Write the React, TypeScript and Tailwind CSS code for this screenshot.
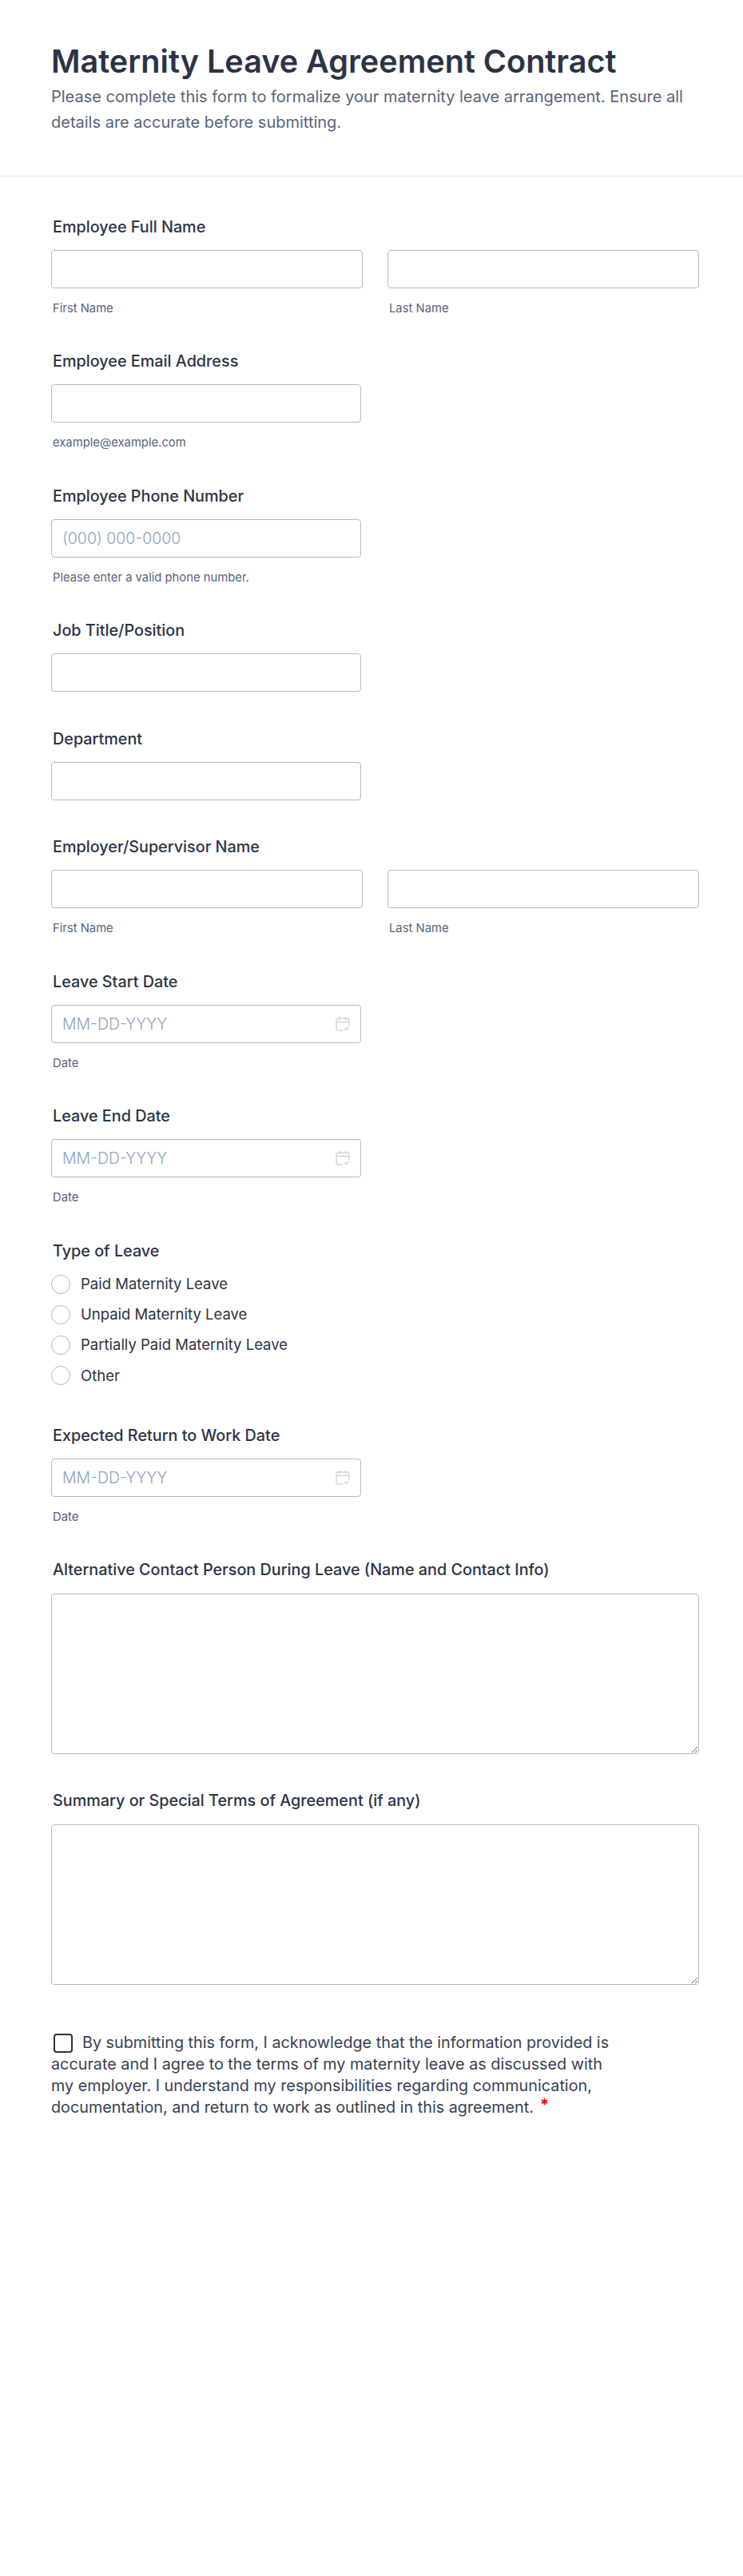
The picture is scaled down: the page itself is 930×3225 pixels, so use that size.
const inputCls =
  "block h-12 rounded-[4px] border border-[#b3b9c6] bg-white px-[13px] text-[19.5px] font-light text-[#2c3345] placeholder:text-[#8ea3bd] outline-none";

function Label({ children }: { children: string }) {
  return <div className="mb-[17px] ml-0.5 h-6 whitespace-nowrap text-[19.8px] font-[450] leading-6 text-[#2c3345]">{children}</div>;
}

function Sub({ children }: { children: string }) {
  return <div className="mt-[17px] ml-0.5 h-4 whitespace-nowrap text-[14.8px] leading-4 text-[#57647e]">{children}</div>;
}

function NameField({ label }: { label: string }) {
  return (
    <div>
      <Label>{label}</Label>
      <div className="flex w-[811px] gap-[31px]">
        <div className="flex-1">
          <input className={inputCls + " w-full"} />
          <Sub>First Name</Sub>
        </div>
        <div className="flex-1">
          <input className={inputCls + " w-full"} />
          <Sub>Last Name</Sub>
        </div>
      </div>
    </div>
  );
}

function TextField({ label, placeholder, sub }: { label: string; placeholder?: string; sub?: string }) {
  return (
    <div>
      <Label>{label}</Label>
      <input className={inputCls + " w-[388px]"} placeholder={placeholder} />
      {sub ? <Sub>{sub}</Sub> : null}
    </div>
  );
}

function CalendarIcon() {
  return (
    <svg width="18" height="18" viewBox="0 0 18 18" fill="none" aria-hidden="true" className="absolute right-[14px] top-[15px]">
      <path
        d="M8.500 17H2.500A1.500 1.500 0 0 1 1 15.500V3.500A1.500 1.500 0 0 1 2.500 2h13A1.500 1.500 0 0 1 17 3.500V11M1 6.500h16M5 0.500v3M13 0.500v3M11.500 15l1.500 1.500 3-3"
        stroke="#c3c8d3"
        strokeWidth="1.100"
        strokeLinecap="round"
        strokeLinejoin="round"
      />
    </svg>
  );
}

function DateField({ label }: { label: string }) {
  return (
    <div>
      <Label>{label}</Label>
      <div className="relative w-[388px]">
        <input className={inputCls + " w-full"} placeholder="MM-DD-YYYY" />
        <CalendarIcon />
      </div>
      <Sub>Date</Sub>
    </div>
  );
}

function AreaField({ label }: { label: string }) {
  return (
    <div>
      <div className="mb-[17.500px] ml-0.5 h-6 whitespace-nowrap text-[19.8px] font-[450] leading-6 text-[#2c3345]">{label}</div>
      <textarea className="block h-[201px] w-[811px] rounded-[4px] border border-[#b3b9c6] bg-white p-3 outline-none" />
    </div>
  );
}

const leaveTypes = ["Paid Maternity Leave", "Unpaid Maternity Leave", "Partially Paid Maternity Leave", "Other"];

export default function App() {
  return (
    <div className="min-h-[3225px] bg-white font-['Inter',sans-serif] text-[#2c3345]">
      <header className="h-[221px] border-b border-[#e3e5ea] px-16 pt-[49px]">
        <h1 className="text-[39.600px] font-semibold leading-[56px] text-[#2c3345]">Maternity Leave Agreement Contract</h1>
        <p className="w-[810px] text-[20px] leading-8 text-[#57647e]">
          Please complete this form to formalize your maternity leave arrangement. Ensure all details are accurate before submitting.
        </p>
      </header>

      <main className="flex flex-col gap-[46.450px] px-16 pt-[51px]">
        <NameField label="Employee Full Name" />
        <TextField label="Employee Email Address" sub="example@example.com" />
        <TextField label="Employee Phone Number" placeholder="(000) 000-0000" sub="Please enter a valid phone number." />
        <TextField label="Job Title/Position" />
        <TextField label="Department" />
        <NameField label="Employer/Supervisor Name" />
        <DateField label="Leave Start Date" />
        <DateField label="Leave End Date" />

        <div className="mb-1">
          <div className="mb-[18px] ml-0.5 h-6 whitespace-nowrap text-[19.8px] font-[450] leading-6 text-[#2c3345]">Type of Leave</div>
          <div className="flex flex-col gap-[14.330px]">
            {leaveTypes.map((t) => (
              <div key={t} className="flex h-6 items-center gap-[13px]">
                <span className="h-6 w-6 rounded-full border border-[#b3b9c6] bg-white" />
                <span className="text-[18.5px] text-[#2c3345]">{t}</span>
              </div>
            ))}
          </div>
        </div>

        <DateField label="Expected Return to Work Date" />
        <AreaField label="Alternative Contact Person During Leave (Name and Contact Info)" />
        <AreaField label="Summary or Special Terms of Agreement (if any)" />

        <div className="mt-[13px] w-[710px] text-[19.800px] leading-[27px] text-[#373f53]">
          <span className="ml-[3px] mr-3 inline-block h-6 w-6 rounded-[4px] border-2 border-[#2c3345] align-[-6px]" />
          By submitting this form, I acknowledge that the information provided is accurate and I agree to the terms of my maternity leave as discussed with my employer. I understand my responsibilities regarding communication, documentation, and return to work as outlined in this agreement.
          <span className="ml-2 align-[3px] text-[20px] font-bold leading-none text-[#ff0000]">*</span>
        </div>
      </main>
    </div>
  );
}
